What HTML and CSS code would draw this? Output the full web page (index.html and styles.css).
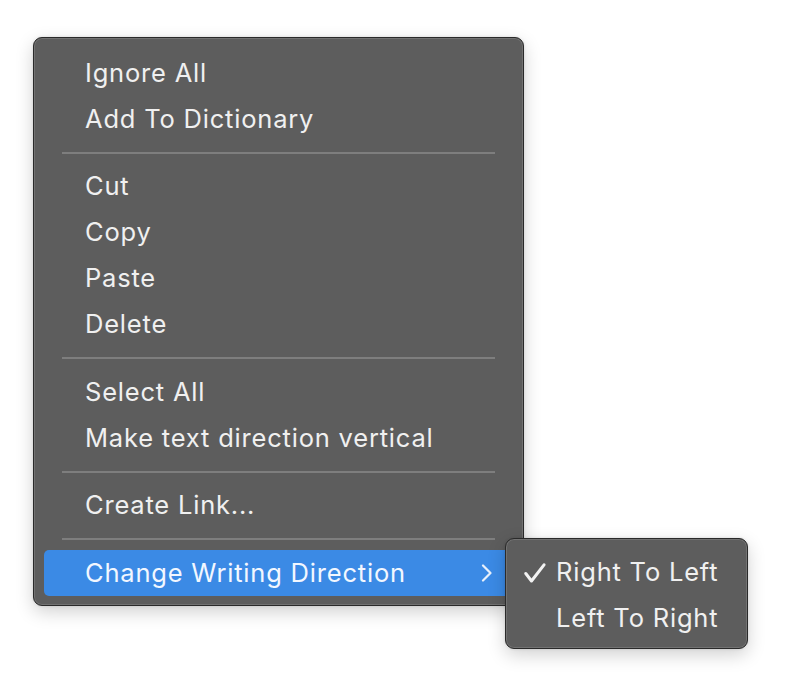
FILE: index.html
```html
<!DOCTYPE html>
<html>
<head>
<meta charset="utf-8">
<link rel="stylesheet" href="styles.css">
</head>
<body>
<div class="stage">
  <div class="menu">
    <div class="item">Ignore All</div>
    <div class="item">Add To Dictionary</div>
    <div class="sep"></div>
    <div class="item">Cut</div>
    <div class="item">Copy</div>
    <div class="item">Paste</div>
    <div class="item">Delete</div>
    <div class="sep"></div>
    <div class="item">Select All</div>
    <div class="item">Make text direction vertical</div>
    <div class="sep"></div>
    <div class="item">Create Link...</div>
    <div class="sep"></div>
    <div class="item active">
      <span>Change Writing Direction</span>
      <svg class="chev" width="12" height="18" viewBox="0 0 12 18"><polyline points="2,1.5 9.5,9 2,16.5" fill="none" stroke="currentColor" stroke-width="2.2" stroke-linecap="round" stroke-linejoin="round"/></svg>
    </div>
    <div class="submenu">
      <div class="sitem">
        <svg class="check" width="22" height="20" viewBox="0 0 22 20"><polyline points="1.8,10.5 7.5,18 20,1.8" fill="none" stroke="currentColor" stroke-width="3" stroke-linecap="round" stroke-linejoin="round"/></svg>
        <span>Right To Left</span>
      </div>
      <div class="sitem"><span>Left To Right</span></div>
    </div>
  </div>
</div>
</body>
</html>
```
FILE: styles.css
```css
html, body {
  margin: 0;
  padding: 0;
  background: #ffffff;
}
body {
  font-family: "Inter", "Liberation Sans", sans-serif;
  width: 792px;
  height: 699px;
  overflow: hidden;
}
.stage {
  padding: 37px 0 0 33px;
}
.menu {
  position: relative;
  box-sizing: border-box;
  width: 491px;
  height: 569px;
  background: #5d5d5d;
  border: 1px solid #2a2a2a;
  border-radius: 9px;
  box-shadow: inset 0 0 0 1px #727272, 0 6px 18px rgba(0,0,0,0.18), 0 0 3px rgba(0,0,0,0.12);
  padding: 12px 10px 9px 10px;
  display: flex;
  flex-direction: column;
}
.item {
  box-sizing: border-box;
  height: 46px;
  display: flex;
  align-items: center;
  justify-content: space-between;
  padding: 0 20px 2px 41px;
  font-size: 25.5px;
  letter-spacing: 0.8px;
  color: #f0f0f0;
  border-radius: 5px;
}
.item.active {
  background: #3b8ae5;
  color: #f2f7ff;
}
.chev {
  display: block;
  color: #e8f0fb;
  margin-top: 2px;
}
.sep {
  height: 2px;
  background: #7e7e7e;
  margin: 9.5px 18px 10px 18px;
}
.submenu {
  position: absolute;
  left: 471px;
  top: 500px;
  box-sizing: border-box;
  width: 243px;
  height: 111px;
  background: #5d5d5d;
  border: 1px solid #2a2a2a;
  border-radius: 9px;
  box-shadow: inset 0 0 0 1px #727272, 0 6px 18px rgba(0,0,0,0.18), 0 0 3px rgba(0,0,0,0.12);
  padding: 10px 10px 7px 10px;
  display: flex;
  flex-direction: column;
}
.sitem {
  position: relative;
  box-sizing: border-box;
  height: 46px;
  display: flex;
  align-items: center;
  padding: 0 0 2px 40px;
  font-size: 25.5px;
  letter-spacing: 0.8px;
  color: #f0f0f0;
}
.check {
  position: absolute;
  left: 8px;
  top: 14px;
  color: #f2f2f2;
}
```
